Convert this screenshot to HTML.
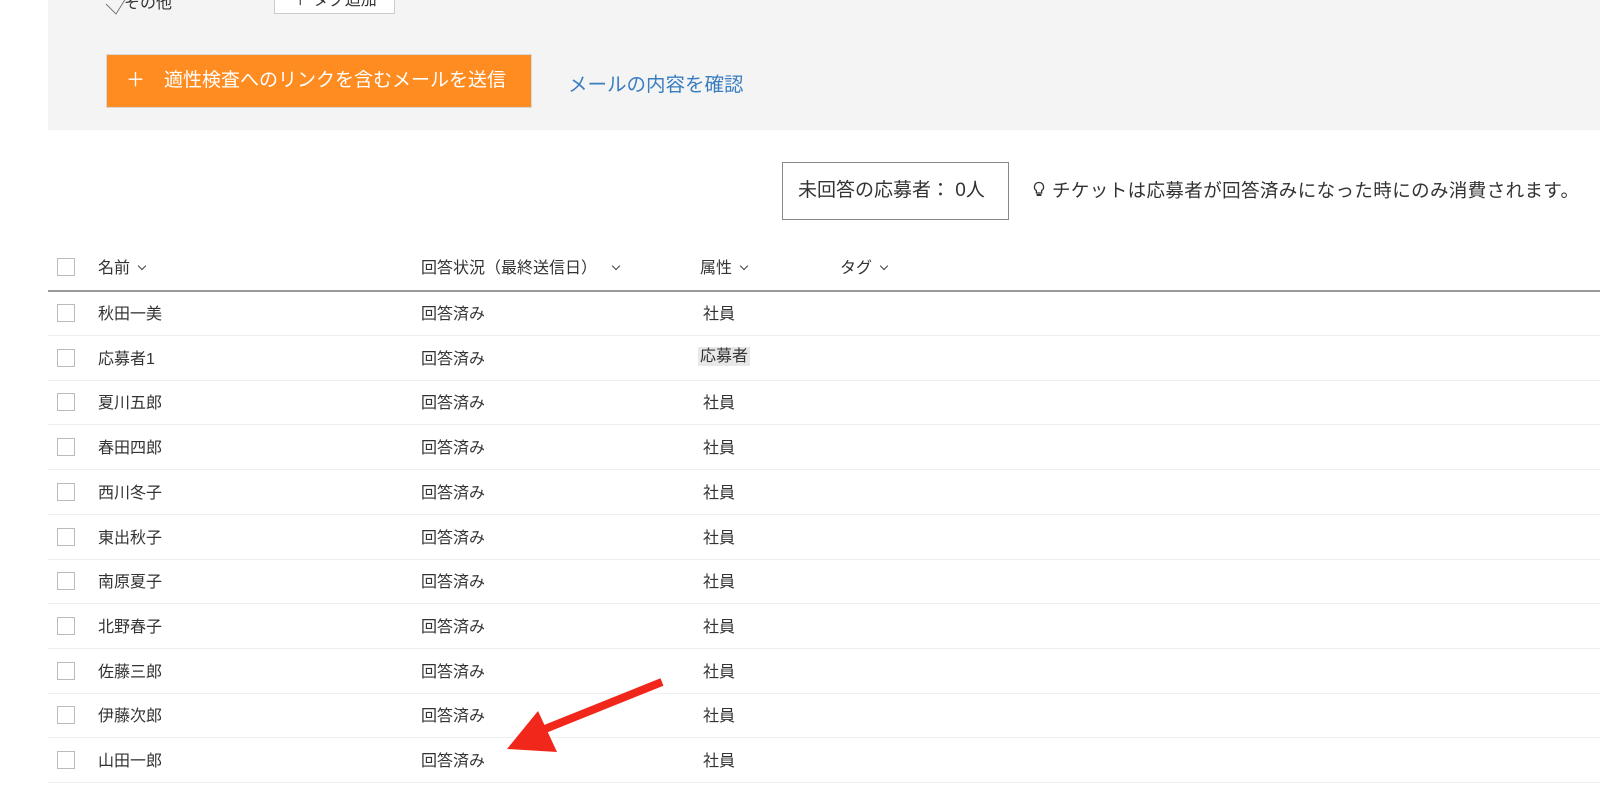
<!DOCTYPE html>
<html><head><meta charset="utf-8"><style>
*{margin:0;padding:0;box-sizing:border-box}
body{width:1600px;height:809px;background:#fff;position:relative;overflow:hidden;font-family:"Liberation Sans","Noto Sans CJK JP",sans-serif;color:#333;font-size:16px}
.abs{position:absolute;white-space:nowrap}
.panel{position:absolute;left:48px;top:0;width:1552px;height:130px;background:#f4f4f4}
.btn{left:106px;top:54px;width:426px;height:54px;background:#ff8c21;border:1px solid #d8d8d8;color:#fff;font-size:19px;line-height:52px;padding-left:19px}
.cb{position:absolute;left:57px;width:18px;height:18px;border:1px solid #bbb;background:#fff}
.row{position:absolute;left:48px;width:1552px;height:1px;background:#efefef}
.chev{display:inline-block;width:6px;height:6px;border-right:1.5px solid #444;border-bottom:1.5px solid #444;transform:rotate(45deg);margin-left:9px;position:relative;top:-4px}
</style></head><body>
<div class="panel"></div>
<svg class="abs" style="left:104px;top:-6px" width="24" height="24"><path d="M2 10 L12 20 L22 4" fill="none" stroke="#777" stroke-width="1"/></svg>
<div class="abs" style="left:124px;top:-11px;font-size:16px">その他</div>
<div class="abs" style="left:274px;top:-12px;width:121px;height:26px;border:1px solid #ccc;background:#fff;font-size:16px;text-align:center;line-height:24px">＋ タグ追加</div>
<div class="abs btn">＋　適性検査へのリンクを含むメールを送信</div>
<div class="abs" style="left:568px;top:68px;font-size:19.5px;color:#3a7ec0">メールの内容を確認</div>
<div class="abs" style="left:782px;top:162px;width:227px;height:58px;border:1px solid #888;font-size:19px;line-height:56px;padding-left:15px">未回答の応募者： 0人</div>
<svg class="abs" style="left:1033px;top:181px" width="12" height="17" viewBox="0 0 12 17"><path d="M6 1.5a4.5 4.5 0 0 0-2.6 8.2V12h5.2V9.7A4.5 4.5 0 0 0 6 1.5z" fill="none" stroke="#333" stroke-width="1.3"/><path d="M3.6 14h4.8" stroke="#333" stroke-width="2"/></svg>
<div class="abs" style="left:1052px;top:177px;font-size:18.5px;letter-spacing:0.4px">チケットは応募者が回答済みになった時にのみ消費されます。</div>

<div class="cb" style="top:258px"></div>
<div class="abs" style="left:98px;top:254px">名前<span class="chev"></span></div>
<div class="abs" style="left:421px;top:254px">回答状況（最終送信日）<span class="chev" style="margin-left:16px"></span></div>
<div class="abs" style="left:700px;top:254px">属性<span class="chev"></span></div>
<div class="abs" style="left:840px;top:254px">タグ<span class="chev"></span></div>
<div class="abs" style="left:48px;top:290px;width:1552px;height:2px;background:#999"></div>

<div id="rows"></div>
<script>
const names=["秋田一美","応募者1","夏川五郎","春田四郎","西川冬子","東出秋子","南原夏子","北野春子","佐藤三郎","伊藤次郎","山田一郎"];
let h="";
names.forEach((n,i)=>{const c=313+44.7*i;
h+=`<div class="cb" style="top:${c-9}px"></div><div class="abs" style="left:98px;top:${c-13}px">${n}</div><div class="abs" style="left:421px;top:${c-13}px">回答済み</div>`;
h+= i==1?`<div class="abs" style="left:698px;top:${c-11}px;background:#e8e8e8;padding:0 2px;line-height:19px">応募者</div>`:`<div class="abs" style="left:703px;top:${c-13}px">社員</div>`;
h+=`<div class="row" style="top:${Math.round(c+22)}px"></div>`;});
document.getElementById("rows").innerHTML=h;
</script>
<svg class="abs" style="left:0;top:0" width="1600" height="809"><line x1="662" y1="682" x2="525" y2="737" stroke="#f2271b" stroke-width="8"/><polygon points="507,749 538,711 557,752" fill="#f2271b"/></svg>
</body></html>
